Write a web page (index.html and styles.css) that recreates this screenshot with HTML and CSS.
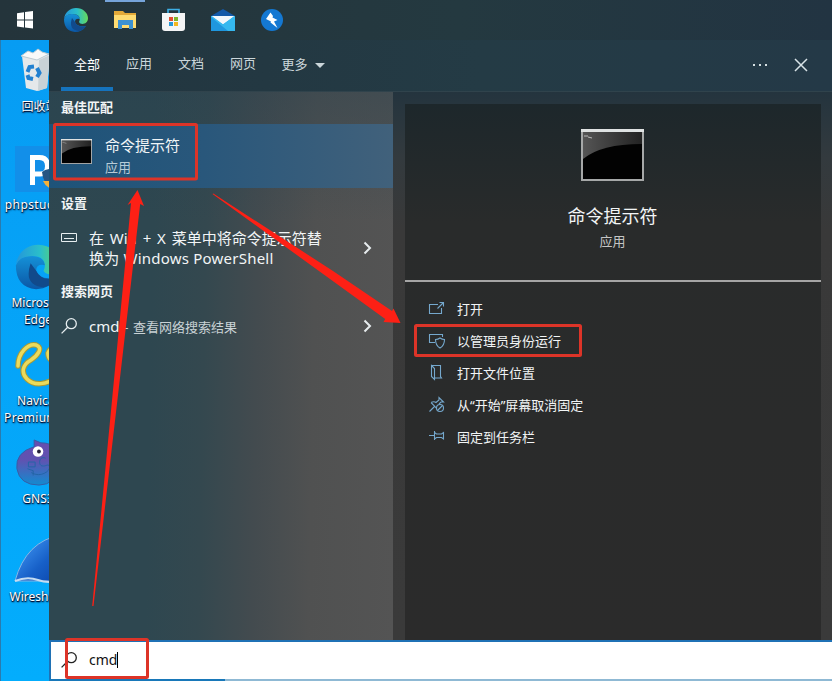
FILE: index.html
```html
<!DOCTYPE html>
<html lang="zh-CN">
<head>
<meta charset="utf-8">
<title>搜索</title>
<link rel="stylesheet" href="styles.css">
</head>
<body>
<div class="screen">
  <header class="taskbar">
    <svg class="start" width="49" height="40" viewBox="0 0 49 40"><path fill="#fff" d="M17 13.2l7-1v7.300h-7zM25 12l8-1v8.500h-8zM17 20.500h7v7l-7-1zM25 20.500h8v8l-8-1z"/></svg>
    <div class="app"><svg width="26" height="26" viewBox="0 0 26 26"><use href="#edge"/></svg></div>
    <div class="app active"><svg width="24" height="22" viewBox="0 0 24 22"><path fill="#e4a938" d="M1 2h9l2 2h11v15H1z"/><path fill="#ffdc72" d="M1 6h22v13H1z"/><path fill="#3c91d2" d="M5 20v-9h15v9h-4v-4H9v4z"/><path fill="#ffdc72" d="M9 16.500h7V19H9z"/></svg></div>
    <div class="app"><svg width="26" height="24" viewBox="0 0 26 24"><path fill="none" stroke="#3dafe5" stroke-width="1.600" d="M7 7V1.500h11V7"/><path fill="#f5f5f5" d="M1 5h23v15q0 3-3 3H4q-3 0-3-3z"/><path fill="#e34e30" d="M8 9h4v4H8z"/><path fill="#7db52b" d="M13 9h4v4h-4z"/><path fill="#2798d7" d="M8 14h4v4H8z"/><path fill="#f4b71e" d="M13 14h4v4h-4z"/></svg></div>
    <div class="app"><svg width="26" height="24" viewBox="0 0 26 24"><path fill="#1459a8" d="M1 8l12-7 12 7v5H1z"/><path fill="#35b8ef" d="M1 8h24v15H1z"/><path fill="#f2f7fb" d="M2 8h22l-11 8z"/><path fill="#1f97de" d="M1 23V9l17 14z"/><path fill="#f2f7fb" d="M2 8h22l-11 8z"/></svg></div>
    <div class="app"><svg width="24" height="24" viewBox="0 0 24 24"><circle cx="12" cy="12" r="11" fill="#1478d2"/><path fill="#fff" d="M10.500 4.500L6 11l5 2.500-.5 1 7 5.500-3.500-6.500 3.500-1.500-5-2.500.500-1.500z"/></svg></div>
  </header>
  <div class="body">
    <aside class="desktop">
      <div class="shortcut recycle">
        <svg width="32" height="46" viewBox="0 0 32 46"><path fill="#e5e8ea" d="M2 8l28-1-3 33-10 3-11-3z"/><path fill="#c9d2d6" d="M19 12l11-5-3 33-9 3z"/><path fill="#f8f9f9" stroke="#bccbd2" d="M1 8l7-5 5 2 5-4 4 3 7 2-12 6z"/><g fill="none" stroke="#2380d0" stroke-width="4"><path d="M7.500 24l2-5 4.500-.5M17 20l2.500 5-2.500 4M13 31l-4.500-1-1-3"/></g></svg>
        <span>回收站</span>
      </div>
      <div class="shortcut php">
        <svg width="46" height="46" viewBox="0 0 46 46"><path fill="#128fe9" d="M0 0h46v46H0z"/><path fill="none" stroke="#fff" stroke-width="5" d="M17.500 39V11.500h7q8 0 8 8.500t-8 8h-7"/><path fill="#275582" d="M27 26q6-5 19-2v22q-17-3-19-20"/><path fill="#f7b137" d="M28 35h12v9q-9-2-12-9"/></svg>
        <span>phpstudy</span>
      </div>
      <div class="shortcut edge-link">
        <svg width="48" height="48" viewBox="0 0 26 26"><use href="#edge"/></svg>
        <span>Microsoft<br>Edge</span>
      </div>
      <div class="shortcut navicat">
        <svg width="48" height="48" viewBox="0 0 48 48"><g fill="none" stroke-linecap="round"><path id="navi" stroke="#a89a35" stroke-width="5.500" d="M4 25C4 12 14 2 22 4c8 3 1 11-5 15-9 5-10 13-4 19 7 7 20 6 29-2M44 6q-8 0-10 6 0 8 8 8"/><path stroke="#ebdb5c" stroke-width="3.500" d="M4 25C4 12 14 2 22 4c8 3 1 11-5 15-9 5-10 13-4 19 7 7 20 6 29-2M44 6q-8 0-10 6 0 8 8 8"/></g></svg>
        <span>Navicat<br><b>Premium</b></span>
      </div>
      <div class="shortcut gns">
        <svg width="48" height="50" viewBox="0 0 48 50"><defs><linearGradient id="gns" x2="0" y2="1"><stop stop-color="#684daf"/><stop offset=".45" stop-color="#5f53b1"/><stop offset="1" stop-color="#128bd0"/></linearGradient></defs><path fill="url(#gns)" stroke="#365da5" d="M20 8V1l7 3q21 0 20 22Q43 48 25 48 5 48 2 31 0 14 20 8"/><circle cx="24" cy="13" r="5.500" fill="#fff"/><circle cx="25" cy="13" r="2" fill="#26233b"/><path fill="none" stroke="#2464a6" d="M32 20c-7-3-8 7-4 8s7-3 8 1-9 12-19 6M14 24h7v5h-7zM13 31l6 2v5"/></svg>
        <span>GNS3</span>
      </div>
      <div class="shortcut shark">
        <svg width="48" height="48" viewBox="0 0 48 48"><defs><linearGradient id="fin" x2="1" y2="1"><stop stop-color="#4ba5ff"/><stop offset=".6" stop-color="#1760c8"/><stop offset="1" stop-color="#0b45aa"/></linearGradient></defs><path fill="url(#fin)" stroke="#85b6e5" d="M1 44Q12 4 47-2v46z"/><path fill="none" stroke="#c4dcf2" stroke-width="2" d="M1 44q12-5 23-1t23 0"/></svg>
        <span>Wireshark</span>
      </div>
    </aside>
    <main class="search">
      <nav class="tabs">
        <span class="tab selected">全部</span><span class="tab">应用</span><span class="tab">文档</span><span class="tab">网页</span><span class="tab more">更多<i class="caret"></i></span>
        <svg class="dots" width="16" height="4" viewBox="0 0 16 4"><path fill="#d6e0e3" d="M1 0h2v2H1zM7 0h2v2H7zM13 0h2v2h-2z"/></svg>
        <svg class="close" width="14" height="14" viewBox="0 0 14 14"><path fill="none" stroke="#d8e3e7" stroke-width="1.500" d="M1 1l12 12M13 1L1 13"/></svg>
      </nav>
      <div class="columns">
        <section class="results">
          <h2>最佳匹配</h2>
          <div class="best">
            <svg width="31" height="25" viewBox="0 0 63 52" preserveAspectRatio="none"><use href="#console"/></svg>
            <div><div class="name">命令提示符</div><div class="kind">应用</div></div>
          </div>
          <h2>设置</h2>
          <div class="row setting">
            <svg class="lead" width="16" height="10" viewBox="0 0 16 10"><path fill="none" stroke="#e7eef0" d="M.5.5h15v8H.5zM3 5.500h10"/></svg>
            <p><span class="l1">在 Win + X 菜单中将命令提示符替</span><br><span class="l2">换为 Windows PowerShell</span></p>
            <svg class="chev" width="9" height="14" viewBox="0 0 9 14"><path d="M1.500 1.500L7 7l-5.500 5.500"/></svg>
          </div>
          <h2>搜索网页</h2>
          <div class="row web">
            <svg class="lead" width="16" height="16" viewBox="0 0 16 16"><use href="#lens" stroke="#e7eef0"/></svg>
            <p>cmd<small> - 查看网络搜索结果</small></p>
            <svg class="chev" width="9" height="14" viewBox="0 0 9 14"><path d="M1.500 1.500L7 7l-5.500 5.500"/></svg>
          </div>
        </section>
        <section class="side">
          <div class="preview">
            <div class="hero">
              <svg width="63" height="52" viewBox="0 0 63 52"><use href="#console"/></svg>
              <div class="title">命令提示符</div>
              <div class="kind">应用</div>
            </div>
            <ul class="actions">
              <li><svg width="18" height="18" viewBox="0 0 18 18"><path d="M10 4.500H1.500v9h12V8M9.500 8.500L15 3M11.500 2.500h4v4"/></svg>打开</li>
              <li><svg width="18" height="18" viewBox="0 0 18 18"><path d="M7 10.500H1.500v-8h13V5M12 6q2 1.500 4.500 1.500 0 6-4.500 8.500-4.500-2.500-4.500-8.500Q10 7.500 12 6z"/></svg>以管理员身份运行</li>
              <li><svg width="18" height="18" viewBox="0 0 18 18"><path d="M3.500 1.500h9v11l1 1.500H7M3.500 1.500l3 3v11l-3-3z"/></svg>打开文件位置</li>
              <li><svg width="18" height="18" viewBox="0 0 18 18"><path d="M1.500 15.500l5-5M3 6.500l4 4 1.500 2M3 6.500q3-1.500 5 0L11 4V1.500L15.500 6H13l-2 2"/><circle cx="12" cy="12" r="3.500"/><path d="M9.500 14.500l5-5"/></svg>从“开始”屏幕取消固定</li>
              <li><svg width="18" height="18" viewBox="0 0 18 18"><path d="M1 7.500h5M6.500 3v9M6.500 4.500l2 1.500h5l2-1.500v6.500l-2-1.500h-5l-2 1.500"/></svg>固定到任务栏</li>
            </ul>
          </div>
        </section>
      </div>
      <div class="query">
        <svg width="16" height="16" viewBox="0 0 16 16"><use href="#lens" stroke="#222"/></svg>
        <span>cmd</span><i class="cursor"></i>
      </div>
      <div class="under"></div>
    </main>
  </div>
  <svg class="marks" width="832" height="681" viewBox="0 0 832 681">
    <g fill="none" stroke="#dd3428" stroke-width="3"><rect x="54.500" y="124.500" width="142" height="54.500" rx="1"/><rect x="415.500" y="325.500" width="165" height="30" rx="1"/><rect x="66.500" y="639.500" width="81" height="38" rx="1"/></g>
    <g fill="#fd2015"><path d="M137.500 190l6.500 16-3.800-2L93.500 606h-1.300L131 203l-3.500 2z"/><path d="M212.500 194l.8-.5L333 271l59 40 1.500-2.500L400.500 323l-17-1 1.700-3L330 279z"/></g>
  </svg>
</div>
<svg class="defs" width="0" height="0">
  <defs>
    <linearGradient id="eg" x2="1"><stop stop-color="#2496db"/><stop offset=".55" stop-color="#2bbfc9"/><stop offset="1" stop-color="#67d95a"/></linearGradient>
    <linearGradient id="eb" x2="0" y2="1"><stop stop-color="#1591d8"/><stop offset="1" stop-color="#0b57a5"/></linearGradient>
    <linearGradient id="glass" x2="1"><stop stop-color="#555"/><stop offset="1" stop-color="#222"/></linearGradient>
    <g id="edge"><path fill="url(#eb)" d="M1 12q2-5 8-5 7 0 8 5-5-1-5 3 1 5 11 4-4 6-11 6Q1 24 1 12"/><path fill="url(#eg)" d="M1 12C2 5 7 1 13 1c7 0 12 5 12 10 0 7-8 7-9 4 2-4 0-8-6-8-5 0-8 2-9 5"/><path fill="#114a8b" d="M9 11q-4 12 7 13 5-1 7-5-8 2-11-4z"/></g>
    <g id="console"><path fill="#a6a8a8" d="M0 0h63v52H0z"/><path fill="#dfe2e2" d="M0 0h63v3H0z"/><path fill="url(#glass)" d="M2 3h59v47H2z"/><path fill="#020202" d="M2 30Q20 15 61 15v35H2z"/><path fill="none" stroke="#bbb" d="M3 7h4M7 8l4 1"/></g>
    <g id="lens" fill="none" stroke-width="1.300"><circle cx="10.300" cy="5.700" r="5"/><path d="M6.700 9.300L.6 15.400"/></g>
  </defs>
</svg>
</body>
</html>
```
FILE: styles.css
```css
* { box-sizing: border-box; }
body {
  margin: 0;
  overflow: hidden;
  font: 13px/20px "Noto Sans", "Noto Sans CJK SC", sans-serif;
  color: #f2f5f6;
}
h2, p, ul { margin: 0; padding: 0; }
svg { display: block; flex: none; }
.screen {
  position: relative;
  width: 832px;
  height: 681px;
  display: flex;
  flex-direction: column;
  overflow: hidden;
}
.taskbar {
  height: 40px;
  display: flex;
  background: linear-gradient(90deg, #24343b, #243940 55%, #223442);
}
.app {
  width: 49px;
  display: flex;
  align-items: center;
  justify-content: center;
  padding: 0 0 0 4px;
}
.app.active {
  background: linear-gradient(#76a4da, #76a4da) 7px 0 / 40px 2px no-repeat;
}
.body { flex: 1; display: flex; min-height: 0; }
.desktop {
  width: 49px;
  overflow: hidden;
  border-left: 1px solid #2a7bae;
  background: linear-gradient(#079cf3, #03adfd);
}
.shortcut {
  height: 98px;
  width: 74px;
  display: flex;
  flex-direction: column;
  align-items: center;
  font-size: 12px;
  line-height: 17px;
  color: #fff;
  text-align: center;
  white-space: nowrap;
  text-shadow: 1px 1px 2px #002, 0 1px 1px #002;
}
.shortcut svg { height: 48px; margin: 7px 0 3px; }
.shortcut.recycle svg { height: 46px; margin: 8px 0 4px; }
.shortcut.recycle span { padding-left: 3px; }
.recycle svg { align-self: flex-start; }
.shortcut.recycle svg { margin-left: 19px; }
.php span { letter-spacing: .4px; margin-right: 10px; }
.navicat b { font-weight: 400; letter-spacing: .3px; margin-right: 14px; }
.search {
  flex: 1;
  min-width: 0;
  display: flex;
  flex-direction: column;
  background: #30464f;
}
.tabs {
  height: 52px;
  display: flex;
  align-items: center;
  padding: 0 24px 0 12px;
  background: linear-gradient(90deg, #22353f, #243b45 55%, #243947);
  border-bottom: 1px solid #30434c;
}
.tab {
  width: 52px;
  height: 51px;
  line-height: 47px;
  text-align: center;
  color: #cbd6da;
}
.tab.selected {
  color: #fff;
  line-height: 48px;
  border-bottom: 4px solid #1573bd;
}
.tab.more { width: 68px; white-space: nowrap; display: flex; gap: 7px; align-items: center; justify-content: center; padding-bottom: 3px; }
.caret { border: 5px solid transparent; border-top-color: #cbd6da; border-bottom: 0; margin-top: 3px; }
.dots { margin-left: auto; margin-right: 26px; }
.close { margin-bottom: 1px; }
.columns { flex: 1; min-height: 0; display: flex; }
.results {
  width: 344px;
  background:
    linear-gradient(rgba(40, 65, 78, .4), transparent 130px),
    linear-gradient(91deg, #2e4750 0 30%, #34484f 45%, #434b4f 60%, #505151 76%, #545454);
}
h2 {
  height: 32px;
  padding-left: 12px;
  font-size: 13px;
  line-height: 30px;
  font-weight: 700;
}
.best {
  height: 64px;
  display: flex;
  align-items: center;
  gap: 13px;
  padding-left: 12px;
  background: linear-gradient(90deg, #1e5379, #29577b 45%, #41617b);
}
.best svg { margin-bottom: 9px; }
.name { font-size: 15px; line-height: 22px; }
.best .kind { line-height: 22px; color: #b8ccd8; padding-bottom: 1px; }
.row { display: flex; align-items: center; padding: 0 21px 0 12px; font-size: 15px; }
.row p { flex: 1; margin-left: 12px; white-space: nowrap; }
.row.setting { height: 56px; }
.setting .lead { align-self: flex-start; margin-top: 13px; }
.l1 { word-spacing: 1.9px; }
.l2 { letter-spacing: .22px; }
.row.web { height: 36px; }
.row small { font-size: 13px; color: #c9d2d5; word-spacing: 1.3px; }
.chev path { fill: none; stroke: #e7ecee; stroke-width: 2; }
.side {
  flex: 1;
  padding: 12px 11px 0 12px;
  background: linear-gradient(#24343e, #333a3e 12%, #393939 25%, #3a3a3a);
}
.preview {
  height: 100%;
  background: linear-gradient(#1d272b, #292b2b 22%, #2b2b2b);
}
.hero {
  height: 178px;
  padding: 25px 1px 0 0;
  display: flex;
  flex-direction: column;
  align-items: center;
  border-bottom: 2px solid #a5a5a5;
}
.title { margin-top: 21px; font-size: 18px; line-height: 28px; }
.hero .kind { margin-top: 1px; color: #c5c5c5; }
.actions { list-style: none; padding: 11px 0 0 23px; }
.actions li { height: 32px; display: flex; align-items: center; gap: 11px; }
.actions svg { fill: none; stroke: #75a8cd; stroke-width: 1.1; }
.query {
  height: 39px;
  display: flex;
  align-items: center;
  padding: 0 0 2px 10px;
  border: solid #1f71b5;
  border-width: 2px 0 0 2px;
  background: #fff;
  color: #111;
  font-size: 14px;
}
.query span { margin-left: 12px; }
.cursor { width: 1px; height: 16px; background: #000; }
.under { height: 2px; background: linear-gradient(90deg, #1878b9 176px, #8fb9d4 176px); }
.marks { position: absolute; left: 0; top: 0; }
.defs { position: absolute; }
```
